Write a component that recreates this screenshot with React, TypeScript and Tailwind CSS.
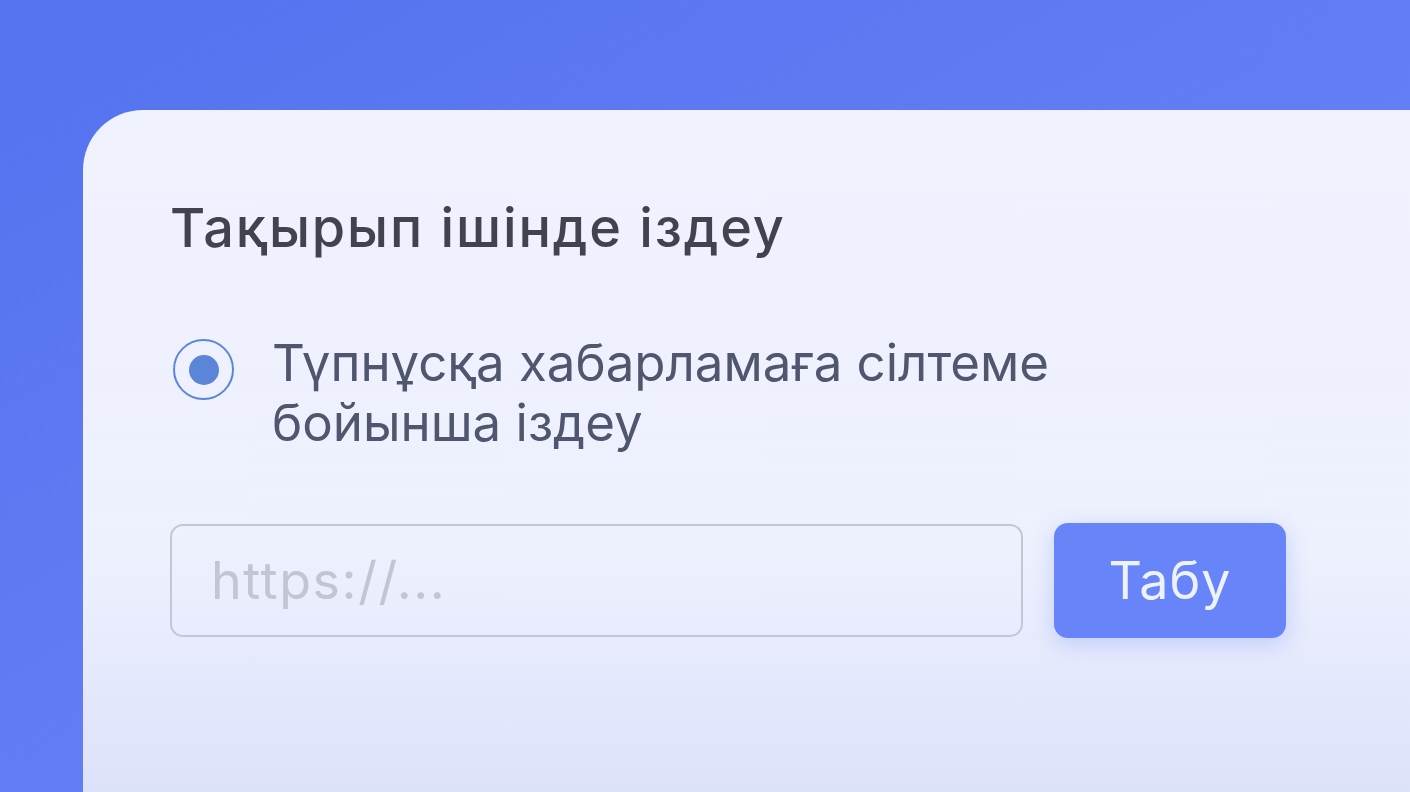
export default function App() {
  return (
    <div className="flex h-[792px] w-full overflow-hidden bg-gradient-to-br from-[#5572ef] to-[#6c88fa] pl-[83px] pt-[110px] font-['Inter',sans-serif]">
      <div className="flex flex-1 flex-col rounded-tl-[60px] bg-gradient-to-b from-[#f0f2fe] via-[#edf0fd] via-65% to-[#dde2fb] pl-[87px] pr-[123px] pt-[88px]">
        {/* Title */}
        <h1 className="text-[54px] font-medium leading-[60px] tracking-[0.035em] text-[#41434f]">
          Тақырып ішінде іздеу
        </h1>

        {/* Radio option */}
        <label className="mt-[75px] flex items-start gap-[38px]">
          <span className="ml-[3px] mt-[6px] flex size-[61px] shrink-0 items-center justify-center rounded-full border-2 border-[#5b86d8]">
            <span className="size-[30px] rounded-full bg-[#5b86d8]" />
          </span>
          <span className="text-[51px] leading-[60px] text-[#50566e]">
            Түпнұсқа хабарламаға сілтеме
            <br />
            бойынша іздеу
          </span>
        </label>

        {/* Search row */}
        <div className="mt-[70px] flex items-center gap-[31px]">
          <div className="flex h-[113px] w-[853px] items-center rounded-[13px] border-2 border-[#c2c6d6] pl-[39px]">
            <span className="text-[52px] tracking-[0.03em] text-[#c1c5d4]">https://...</span>
          </div>
          <button className="flex h-[115px] w-[232px] items-center justify-center rounded-[14px] bg-[#6784f8] text-[52px] tracking-[0.02em] text-[#eef1fe] shadow-[0_6px_22px_rgba(103,132,248,0.3)]">
            Табу
          </button>
        </div>
      </div>
    </div>
  );
}
